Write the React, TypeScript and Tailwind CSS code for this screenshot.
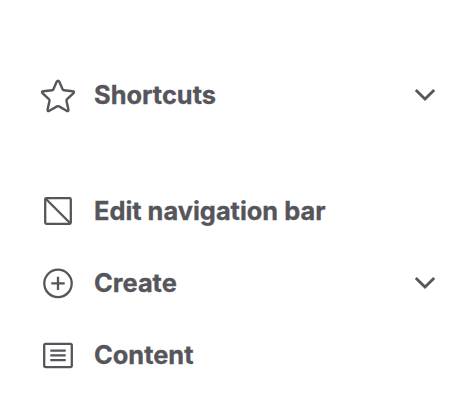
import React from "react";

const Star = () => (
  <svg width="36" height="36" viewBox="0 0 36 36" fill="none" stroke="currentColor" strokeWidth="2.4" strokeLinejoin="round">
    <path d="M16.8 4.6Q18 2.6 19.2 4.6L22.6 12.2Q23 13.1 24 13.2L32.6 14.2Q35 14.6 33.3 16.4L27.1 22.2Q26.3 22.9 26.5 23.9L28.4 32.5Q28.7 34.8 26.6 33.8L19 29.4Q18 28.8 17 29.4L9.4 33.8Q7.3 34.8 7.6 32.5L9.5 23.9Q9.7 22.9 8.9 22.2L2.7 16.4Q1 14.6 3.4 14.2L12 13.2Q13 13.1 13.4 12.2Z" />
  </svg>
);

const EditBar = () => (
  <svg width="36" height="36" viewBox="0 0 36 36" fill="none" stroke="currentColor" strokeWidth="2.3" strokeLinejoin="round">
    <rect x="5.2" y="5.2" width="25.6" height="25.6" rx="1.2" />
    <path d="M5.5 5.5L30.5 30.5" />
  </svg>
);

const Create = () => (
  <svg width="36" height="36" viewBox="0 0 36 36" fill="none" stroke="currentColor" strokeWidth="2.3">
    <circle cx="18" cy="18.4" r="13.7" />
    <path d="M18 11.7V25.1M11.3 18.4H24.7" />
  </svg>
);

const Content = () => (
  <svg width="36" height="36" viewBox="0 0 36 36" fill="none" stroke="currentColor" strokeWidth="2.3" strokeLinejoin="round">
    <rect x="4.2" y="6.8" width="27.6" height="23.3" rx="1.5" />
    <path d="M10.3 13.6H25.7M10.3 18.4H25.7M10.3 23.2H25.7" />
  </svg>
);

const Chevron = () => (
  <svg className="ml-auto" width="24" height="24" viewBox="0 0 24 24" fill="none" stroke="currentColor" strokeWidth="2.8">
    <path d="M2.8 7L12 16L21.2 7" />
  </svg>
);

function Row({ icon, label, expandable }: { icon: React.ReactNode; label: string; expandable?: boolean }) {
  return (
    <div className="flex h-[72px] items-center pr-[37px] pl-10">
      {icon}
      <span className="ml-[18px] pb-px text-[25.4px] leading-8 font-bold whitespace-nowrap [-webkit-text-stroke:0.3px_currentColor]">{label}</span>
      {expandable && <Chevron />}
    </div>
  );
}

export default function App() {
  return (
    <nav className="h-[408px] w-[474px] overflow-hidden bg-white pt-[59px] font-['Inter',sans-serif] text-[#55555b]">
      <Row icon={<Star />} label="Shortcuts" expandable />
      <div className="mt-11">
        <Row icon={<EditBar />} label="Edit navigation bar" />
        <Row icon={<Create />} label="Create" expandable />
        <Row icon={<Content />} label="Content" />
      </div>
    </nav>
  );
}
